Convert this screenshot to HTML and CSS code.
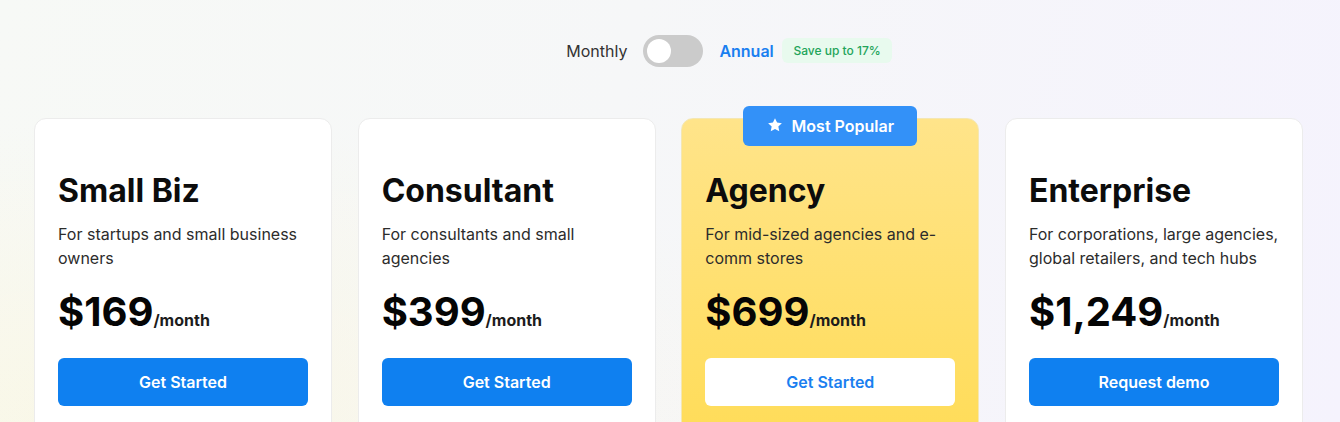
FILE: index.html
```html
<!DOCTYPE html>
<html lang="en">
<head>
  <meta charset="UTF-8" />
  <meta name="viewport" content="width=device-width, initial-scale=1.0"/>
  <title>Pricing</title>
  <link rel="stylesheet" href="styles.css">
</head>
<body>
  <div class="billing">
    <span class="billing-label">Monthly</span>
    <span class="switch"><span class="knob"></span></span>
    <span class="billing-label active">Annual
      <span class="save">Save up to 17%</span>
    </span>
  </div>

  <div class="plans">
    <div class="plan">
      <h2>Small Biz</h2>
      <p class="desc">For startups and small business owners</p>
      <div class="price">$169<span>/month</span></div>
      <a class="btn" href="#">Get Started</a>
    </div>

    <div class="plan">
      <h2>Consultant</h2>
      <p class="desc">For consultants and small agencies</p>
      <div class="price">$399<span>/month</span></div>
      <a class="btn" href="#">Get Started</a>
    </div>

    <div class="plan featured">
      <div class="popular">
        <svg width="16" height="16" viewBox="0 0 24 24"><path fill="#fff" d="M12 1.8l3.1 6.6 7.2.9-5.3 5 1.4 7.1L12 17.9l-6.4 3.5 1.4-7.1-5.3-5 7.2-.9z"/></svg>
        Most Popular
      </div>
      <h2>Agency</h2>
      <p class="desc">For mid-sized agencies and e-comm stores</p>
      <div class="price">$699<span>/month</span></div>
      <a class="btn light" href="#">Get Started</a>
    </div>

    <div class="plan">
      <h2>Enterprise</h2>
      <p class="desc">For corporations, large agencies, global retailers, and tech hubs</p>
      <div class="price">$1,249<span>/month</span></div>
      <a class="btn" href="#">Request demo</a>
    </div>
  </div>
</body>
</html>
```

FILE: styles.css
```css
body {
  margin: 0;
  height: 422px;
  overflow: hidden;
  font-family: Inter, "Noto Sans", sans-serif;
  color: #111;
  background:
    radial-gradient(ellipse 700px 300px at 10% 100%, rgba(255, 244, 200, 0.35), transparent),
    linear-gradient(100deg, #f7f9f6 0%, #f6f7f8 45%, #f5f3fd 100%);
}

.billing { display: flex; align-items: center; justify-content: center; gap: 16px; padding-top: 35px; height: 32px; }
.billing-label { font-size: 16px; color: #333; position: relative; }
.billing-label.active { color: #1a7ff0; font-weight: 600; }
.switch { width: 60px; height: 32px; border-radius: 16px; background: #cbcbcb; display: flex; align-items: center; padding: 0 4px; box-sizing: border-box; }
.knob { width: 24px; height: 24px; border-radius: 50%; background: #fff; }
.save {
  position: absolute; left: 63px; top: -3px;
  white-space: nowrap;
  font-size: 12px; font-weight: 500; color: #22a45a;
  background: #e8faee; border-radius: 6px;
  padding: 5px 11px;
}

.plans {
  display: grid;
  grid-template-columns: repeat(4, 1fr);
  gap: 25.6px;
  width: 1269px;
  margin: 51px 0 0 34px;
}
.plan {
  position: relative;
  background: #fff;
  border: 1px solid #ececec;
  border-radius: 12px;
  padding: 53px 23px 40px;
}
.plan.featured {
  background: linear-gradient(180deg, #ffe48a 0%, #ffdc57 100%);
  border-color: #f4e7b3;
}
.popular {
  position: absolute; top: -13px; left: 50%; transform: translateX(-50%);
  display: flex; align-items: center; justify-content: center; gap: 9px;
  width: 174px; height: 40px; border-radius: 6px;
  background: #3391f8; color: #fff;
  font-size: 16px; font-weight: 600;
}
.popular svg { margin-top: -2px; }

h2 { margin: 0; font-size: 32px; font-weight: 700; line-height: 38px; color: #0c0c0c; }
.desc { margin: 12px 0 0; font-size: 16px; line-height: 24px; color: #2c2c2c; max-width: 250px; }
.price { margin-top: 18px; font-size: 40px; font-weight: 700; line-height: 48px; color: #050505; }
.price span { font-size: 16px; color: #1c1c1c; }

.btn {
  display: flex; align-items: center; justify-content: center;
  margin-top: 14px; height: 48px; border-radius: 6px;
  background: #0f80f0; color: #fff;
  font-size: 16px; font-weight: 600; text-decoration: none;
}
.btn.light { background: #fff; color: #1a7ff0; }
```
